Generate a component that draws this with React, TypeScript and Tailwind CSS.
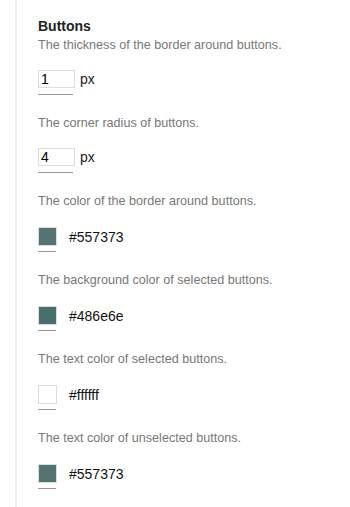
import React from 'react'

const font = "font-['Liberation_Sans',Arial,sans-serif]"

function NumberField({ label, value }: { label: string; value: string }) {
  return (
    <div>
      <p className="mt-[21px] text-[12.6px] leading-[15px] text-[#777]">{label}</p>
      <div className="mt-[17px] flex items-center">
        <input
          readOnly
          value={value}
          className="h-[18px] w-[37px] border border-[#dddddd] px-[2px] text-[14px] leading-4 text-black outline-none"
        />
        <span className="ml-[5px] text-[14px] leading-4 text-[#222]">px</span>
      </div>
      <div className="mt-[6px] h-px w-[35px] bg-[#999]" />
    </div>
  )
}

function ColorField({ label, color }: { label: string; color: string }) {
  return (
    <div>
      <p className="mt-[21px] text-[12.6px] leading-[15px] text-[#777]">{label}</p>
      <div className="mt-[18px] flex items-center">
        <span className="h-[19px] w-[19px] border border-[#dddddd]" style={{ backgroundColor: color }} />
        <span className="ml-3 text-[14px] leading-4 text-[#111]">{color}</span>
      </div>
      <div className="mt-[5px] h-px w-[18px] bg-[#999]" />
    </div>
  )
}

export default function App() {
  return (
    <div className={`min-h-[507px] w-[350px] bg-white ${font}`}>
      <div className="ml-[15px] min-h-[507px] border-l-2 border-[#eeeeee] pl-[21px] pt-[18px]">
        <h3 className="text-[14px] font-bold leading-4 text-[#222]">Buttons</h3>
        <p className="mt-1 text-[12.6px] leading-[15px] text-[#777]">The thickness of the border around buttons.</p>
        <div className="mt-[17px] flex items-center">
          <input
            readOnly
            value="1"
            className="h-[18px] w-[37px] border border-[#dddddd] px-[2px] text-[14px] leading-4 text-black outline-none"
          />
          <span className="ml-[5px] text-[14px] leading-4 text-[#222]">px</span>
        </div>
        <div className="mt-[6px] h-px w-[35px] bg-[#999]" />
        <NumberField label="The corner radius of buttons." value="4" />
        <ColorField label="The color of the border around buttons." color="#557373" />
        <ColorField label="The background color of selected buttons." color="#486e6e" />
        <ColorField label="The text color of selected buttons." color="#ffffff" />
        <ColorField label="The text color of unselected buttons." color="#557373" />
      </div>
    </div>
  )
}
